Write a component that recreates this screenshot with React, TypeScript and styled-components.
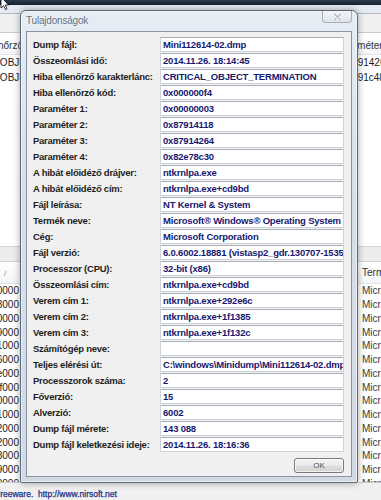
import React from 'react';
import styled, { createGlobalStyle } from 'styled-components';

const Global = createGlobalStyle`
  html, body { margin: 0; padding: 0; width: 381px; height: 500px; overflow: hidden; background: #f0f0f0; }
  #root { width: 381px; height: 500px; }
`;

const Page = styled.div`
  position: relative;
  width: 381px;
  height: 500px;
  overflow: hidden;
  display: flex;
  flex-direction: column;
  font-family: "Liberation Sans", Arial, sans-serif;
  font-size: 10px;
  color: #222;
`;

const TopBar = styled.div`
  flex: none;
  height: 5px;
  background: linear-gradient(180deg, #2c3b4e, #16212e);
`;

const FrameBand = styled.div`
  flex: none;
  height: 8px;
  background: #e5ebf2;
  border-bottom: 1px solid #b3bcc7;
`;

const Toolbar = styled.div`
  flex: none;
  height: 18px;
  background: #f0f0f0;
  border-bottom: 1px solid #c9cdd2;
`;

const List = styled.div<{ $h?: number }>`
  flex: ${p => (p.$h ? 'none' : '1')};
  height: ${p => (p.$h ? `${p.$h}px` : 'auto')};
  background: #fff;
  overflow: hidden;
  display: flex;
  flex-direction: column;
`;

const ListHead = styled.div<{ $h: number; $cols: string; $top?: number }>`
  flex: none;
  margin-top: ${p => p.$top ?? 0}px;
  height: ${p => p.$h}px;
  display: grid;
  grid-template-columns: ${p => p.$cols};
  align-items: center;
  background: linear-gradient(180deg, #ffffff, #f3f5f7);
  border-bottom: 1px solid #e2e4e7;
  box-sizing: border-box;
  color: #333;
`;

const ListRow = styled.div<{ $h: number; $cols: string }>`
  flex: none;
  height: ${p => p.$h}px;
  display: grid;
  grid-template-columns: ${p => p.$cols};
  align-items: center;
  color: #1c1c1c;
`;

const EndCell = styled.div<{ $pad?: number }>`
  display: flex;
  justify-content: flex-end;
  overflow: hidden;
  white-space: nowrap;
  padding-right: ${p => p.$pad ?? 0}px;
`;

const StartCell = styled.div<{ $pad?: number; $color?: string }>`
  overflow: hidden;
  white-space: nowrap;
  padding-left: ${p => p.$pad ?? 0}px;
  color: ${p => p.$color ?? 'inherit'};
`;

const SortMark = styled.span`
  padding-left: 4px;
  font-size: 8px;
  color: #8c8c8c;
`;

const Splitter = styled.div`
  flex: none;
  height: 14px;
  background: #ececec;
  border-top: 1px solid #d0d4d9;
  border-bottom: 1px solid #cfd3d8;
`;

const StatusBar = styled.div`
  flex: none;
  height: 18px;
  box-sizing: border-box;
  padding-top: 6px;
  background: #f0f0f0;
  border-top: 1px solid #c9c9c9;
  font-family: "Liberation Sans", Arial, sans-serif;
  font-size: 8.5px;
  line-height: 11px;
  color: #1d2f86;
  white-space: nowrap;
  text-indent: -5px;
  overflow: hidden;
  -webkit-text-stroke: 0.25px #1d2f86;
`;

const Cursor = styled.svg`
  position: absolute;
  left: 0;
  top: -3px;
`;

/* ---------- dialog ---------- */

const Dialog = styled.div`
  position: absolute;
  left: 20px;
  top: 10px;
  width: 338px;
  height: 473px;
  box-sizing: border-box;
  border: 1px solid #5f6a78;
  border-radius: 6px 6px 2px 2px;
  background: linear-gradient(180deg, #e7edf4 0%, #d8dfe7 35%, #d2d9e2 100%);
  box-shadow: 0 0 7px rgba(0, 0, 0, 0.35), inset 0 0 0 1px rgba(255, 255, 255, 0.55);
  padding: 0 5px 5px;
  display: flex;
  flex-direction: column;
`;

const TitleBar = styled.div`
  flex: none;
  height: 20px;
  display: flex;
  justify-content: space-between;
  align-items: flex-start;
`;

const Title = styled.span`
  font-family: "Liberation Sans", Arial, sans-serif;
  font-size: 10px;
  line-height: 20px;
  color: #66727f;
  letter-spacing: -0.2px;
  text-shadow: 0 0 5px rgba(255, 255, 255, 0.9);
`;

const CloseBtn = styled.div`
  width: 30px;
  height: 12px;
  box-sizing: border-box;
  border: 1px solid #a4adb8;
  border-top: none;
  border-radius: 0 0 4px 4px;
  background: linear-gradient(180deg, #f3f5f8, #dfe4ea);
  display: flex;
  align-items: center;
  justify-content: center;
`;

const Client = styled.div`
  flex: 1;
  border: 1px solid #8995a3;
  background: #f0f0f0;
  padding: 5px 7px 3px 6px;
  display: flex;
  flex-direction: column;
`;

const PropRow = styled.div`
  flex: none;
  height: 15px;
  margin-bottom: 1px;
  display: grid;
  grid-template-columns: 127px 1fr;
  align-items: center;
`;

const Label = styled.div`
  font-family: "Liberation Sans", Arial, sans-serif;
  font-weight: bold;
  font-size: 9.5px;
  letter-spacing: -0.25px;
  line-height: 15px;
  color: #1e1e1e;
  white-space: nowrap;
`;

const ValueBox = styled.div`
  height: 15px;
  box-sizing: border-box;
  background: #fff;
  border: 1px solid #cdd2d8;
  border-top-color: #a9afb7;
  padding: 0 2px;
  font-family: "Liberation Sans", Arial, sans-serif;
  font-weight: bold;
  font-size: 9.5px;
  letter-spacing: -0.2px;
  line-height: 13px;
  color: #18186e;
  white-space: nowrap;
  overflow: hidden;
`;

const Footer = styled.div`
  margin-top: auto;
  display: flex;
  justify-content: flex-end;
`;

const OkButton = styled.button`
  width: 50px;
  height: 15px;
  box-sizing: border-box;
  padding: 0;
  border: 1px solid #7a7a7a;
  border-radius: 3px;
  background: linear-gradient(180deg, #f4f4f4 0%, #ececec 48%, #dedede 52%, #d2d2d2 100%);
  box-shadow: inset 0 0 0 1px rgba(255, 255, 255, 0.7);
  font-family: "Liberation Sans", Arial, sans-serif;
  font-size: 8px;
  color: #555;
`;

const props: [string, string][] = [
  ['Dump fájl:', 'Mini112614-02.dmp'],
  ['Összeomlási idő:', '2014.11.26. 18:14:45'],
  ['Hiba ellenőrző karakterlánc:', 'CRITICAL_OBJECT_TERMINATION'],
  ['Hiba ellenőrző kód:', '0x000000f4'],
  ['Paraméter 1:', '0x00000003'],
  ['Paraméter 2:', '0x87914118'],
  ['Paraméter 3:', '0x87914264'],
  ['Paraméter 4:', '0x82e78c30'],
  ['A hibát előidéző drájver:', 'ntkrnlpa.exe'],
  ['A hibát előidéző cím:', 'ntkrnlpa.exe+cd9bd'],
  ['Fájl leírása:', 'NT Kernel & System'],
  ['Termék neve:', 'Microsoft® Windows® Operating System'],
  ['Cég:', 'Microsoft Corporation'],
  ['Fájl verzió:', '6.0.6002.18881 (vistasp2_gdr.130707-1535)'],
  ['Processzor (CPU):', '32-bit (x86)'],
  ['Összeomlási cím:', 'ntkrnlpa.exe+cd9bd'],
  ['Verem cím 1:', 'ntkrnlpa.exe+292e6c'],
  ['Verem cím 2:', 'ntkrnlpa.exe+1f1385'],
  ['Verem cím 3:', 'ntkrnlpa.exe+1f132c'],
  ['Számítógép neve:', ''],
  ['Teljes elérési út:', 'C:\\windows\\Minidump\\Mini112614-02.dmp'],
  ['Processzorok száma:', '2'],
  ['Főverzió:', '15'],
  ['Alverzió:', '6002'],
  ['Dump fájl mérete:', '143 088'],
  ['Dump fájl keletkezési ideje:', '2014.11.26. 18:16:36'],
];

const upperRows = [
  ['CRITICAL_OBJE', '0x87914264'],
  ['CRITICAL_OBJE', '0x8691c484'],
];

const lowerLeft = [
  '0x82c00000', '0x82c38000', '0x80400000', '0x80419000', '0x80421000', '0x80436000',
  '0x8049e000', '0x804af000', '0x804c0000', '0x804d1000', '0x804e2000', '0x80512000',
  '0x80548000', '0x80559000', '0x80580000',
];

const UPPER_COLS = '26px 1fr 45px';
const LOWER_COLS = '23px 1fr 23px';

export default function App() {
  return (
    <>
      <Global />
      <Page>
        <TopBar />
        <FrameBand />
        <Toolbar />
        <List $h={213}>
          <ListHead $h={18} $cols={UPPER_COLS} $top={4}>
            <EndCell $pad={3}>Hiba ellenőrző</EndCell>
            <div />
            <StartCell>Paraméter 2</StartCell>
          </ListHead>
          {upperRows.map((r, i) => (
            <ListRow key={i} $h={15} $cols={UPPER_COLS}>
              <EndCell>{r[0]}</EndCell>
              <div />
              <StartCell>{r[1]}</StartCell>
            </ListRow>
          ))}
        </List>
        <Splitter />
        <List>
          <ListHead $h={22} $cols={LOWER_COLS}>
            <StartCell>
              <SortMark>/</SortMark>
            </StartCell>
            <div />
            <StartCell $pad={4}>Termék neve</StartCell>
          </ListHead>
          {lowerLeft.map((v, i) => (
            <ListRow key={i} $h={13.75} $cols={LOWER_COLS}>
              <EndCell $pad={4}>{v}</EndCell>
              <div />
              <StartCell $pad={4} $color="#3a3a3a">
                Microsoft® Windows® Operating System
              </StartCell>
            </ListRow>
          ))}
        </List>
        <StatusBar>Freeware.&nbsp; http://www.nirsoft.net</StatusBar>

        <Cursor width="10" height="14" viewBox="0 0 10 14">
          <path d="M1 0 L1 11 L3.6 8.6 L5.4 12.6 L7 11.9 L5.3 8 L8.6 8 Z" fill="#fff" stroke="#000" strokeWidth="0.8" />
        </Cursor>

        <Dialog>
          <TitleBar>
            <Title>Tulajdonságok</Title>
            <CloseBtn>
              <svg width="9" height="8" viewBox="0 0 9 8">
                <path d="M1.5 1 L7.5 7 M7.5 1 L1.5 7" stroke="#ffffff" strokeWidth="2.6" strokeLinecap="round" />
                <path d="M1.5 1 L7.5 7 M7.5 1 L1.5 7" stroke="#a9b2bd" strokeWidth="1.4" strokeLinecap="round" />
              </svg>
            </CloseBtn>
          </TitleBar>
          <Client>
            {props.map(([k, v]) => (
              <PropRow key={k}>
                <Label>{k}</Label>
                <ValueBox>{v}</ValueBox>
              </PropRow>
            ))}
            <Footer>
              <OkButton>OK</OkButton>
            </Footer>
          </Client>
        </Dialog>
      </Page>
    </>
  );
}
